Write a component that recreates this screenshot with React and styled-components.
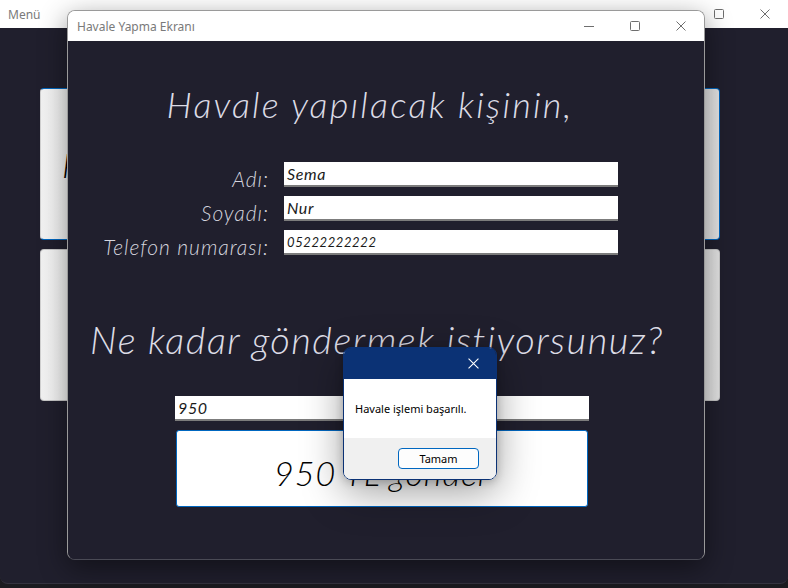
import React from 'react';
import styled, { createGlobalStyle } from 'styled-components';

const GlobalStyle = createGlobalStyle`
  html, body {
    margin: 0;
    padding: 0;
    background: #1b1b20;
    overflow: hidden;
  }
  * {
    box-sizing: border-box;
  }
`;

const uiFont = `"Noto Sans", "Open Sans", sans-serif`;
const formFont = `Lato, "Open Sans", sans-serif`;

const Desktop = styled.div`
  position: relative;
  width: 788px;
  height: 588px;
  background: #1b1b20;
`;

const MenuWindow = styled.div`
  display: flex;
  flex-direction: column;
  height: 584px;
  background: #201f2d;
  border-bottom-left-radius: 8px;
  border-bottom-right-radius: 8px;
  border-bottom: 1px solid #34333f;
  overflow: hidden;
`;

const TitleBar = styled.div`
  display: flex;
  align-items: center;
  justify-content: space-between;
  height: ${({ $height }) => $height}px;
  background: #ffffff;
  flex-shrink: 0;
`;

const TitleText = styled.span`
  padding-left: ${({ $indent }) => $indent}px;
  font-family: ${uiFont};
  font-size: 12px;
  color: #7a7a7a;
`;

const Controls = styled.div`
  display: flex;
  height: 100%;
`;

const ControlButton = styled.div`
  width: 46px;
  height: 100%;
  display: flex;
  align-items: center;
  justify-content: center;
  color: ${({ $light }) => ($light ? '#ffffff' : '#6e6e6e')};
`;

const MenuBody = styled.div`
  display: flex;
  flex-direction: column;
  gap: 9px;
  padding: 60px 68px 0 40px;
`;

const MenuCard = styled.div`
  height: 152px;
  display: flex;
  align-items: center;
  justify-content: ${({ $centered }) => ($centered ? 'center' : 'flex-start')};
  padding-left: ${({ $centered }) => ($centered ? 0 : 21)}px;
  border-radius: 4px;
  border: 1px solid ${({ $active }) => ($active ? '#0067c0' : '#c8c8c8')};
  border-left-color: #d0d0d0;
  background: linear-gradient(to right, #f2f2f2, #ffffff 10%, #f4f4f4 80%, #e4e4e4);
  font-family: ${formFont};
  font-style: italic;
  font-weight: 300;
  font-size: 34px;
  letter-spacing: 1px;
  color: #000;
  white-space: nowrap;
  overflow: hidden;
`;

const Window = styled.div`
  position: absolute;
  left: 67px;
  top: 10px;
  width: 638px;
  height: 550px;
  display: flex;
  flex-direction: column;
  border: 1px solid #9a9a9a;
  border-bottom-color: #4a4a55;
  border-radius: 8px;
  overflow: hidden;
  box-shadow: 0 8px 28px rgba(0, 0, 0, 0.45);
`;

const WindowBody = styled.div`
  flex: 1;
  display: flex;
  flex-direction: column;
  align-items: flex-start;
  background: #201f2d;
  padding-top: 42px;
`;

const Heading = styled.div`
  align-self: center;
  font-family: ${formFont};
  font-style: italic;
  font-weight: 300;
  font-size: ${({ $size }) => $size}px;
  line-height: ${({ $line }) => $line}px;
  letter-spacing: ${({ $spacing }) => $spacing}px;
  margin-top: ${({ $top }) => $top}px;
  margin-right: ${({ $shift }) => $shift}px;
  color: #dcdce6;
  white-space: nowrap;
`;

const FormGrid = styled.div`
  display: grid;
  grid-template-columns: 201px 334px;
  grid-auto-rows: 25px;
  column-gap: 15px;
  row-gap: 9px;
  margin-top: 37px;
`;

const Label = styled.label`
  height: 25px;
  text-align: right;
  font-family: ${formFont};
  font-style: italic;
  font-weight: 300;
  font-size: 21px;
  letter-spacing: 1px;
  line-height: 33px;
  color: #d4d4de;
  white-space: nowrap;
`;

const Field = styled.div`
  height: 25px;
  width: ${({ $width }) => $width || 334}px;
  margin-left: ${({ $left }) => $left || 0}px;
  margin-top: ${({ $top }) => $top || 0}px;
  display: flex;
  align-items: center;
  padding-left: 3px;
  background: #ffffff;
  border-bottom: 2px solid #7c7c7c;
  font-family: ${formFont};
  font-style: italic;
  font-weight: 400;
  font-size: ${({ $size }) => $size || 16}px;
  letter-spacing: 0.6px;
  color: #1a1a1a;
`;

const SendButton = styled.div`
  width: 412px;
  height: 77px;
  margin-left: 108px;
  margin-top: 9px;
  display: flex;
  align-items: center;
  justify-content: center;
  padding-top: 8px;
  border: 1px solid #0067c0;
  border-radius: 3px;
  background: #ffffff;
  font-family: ${formFont};
  font-style: italic;
  font-weight: 300;
  font-size: 34px;
  letter-spacing: 1px;
  color: #000;
`;

const MessageBox = styled.div`
  position: absolute;
  left: 343px;
  top: 347px;
  width: 154px;
  height: 133px;
  display: flex;
  flex-direction: column;
  border: 1px solid #0b3275;
  border-radius: 8px;
  overflow: hidden;
  box-shadow: 0 12px 40px rgba(0, 0, 0, 0.38), 0 2px 8px rgba(0, 0, 0, 0.2);
`;

const MessageHeader = styled.div`
  height: 31px;
  display: flex;
  justify-content: flex-end;
  background: #0b3275;
  flex-shrink: 0;
`;

const MessageText = styled.div`
  height: 59px;
  display: flex;
  align-items: center;
  padding-left: 11px;
  background: #ffffff;
  font-family: ${uiFont};
  font-size: 11px;
  color: #000;
  white-space: nowrap;
`;

const MessageFooter = styled.div`
  flex: 1;
  display: flex;
  justify-content: flex-end;
  align-items: flex-start;
  padding: 10px 17px 0 0;
  background: #f0f0f0;
`;

const OkButton = styled.div`
  width: 81px;
  height: 21px;
  display: flex;
  align-items: center;
  justify-content: center;
  border: 1px solid #0067c0;
  border-radius: 4px;
  background: #fdfdfd;
  font-family: ${uiFont};
  font-size: 11px;
  color: #000;
`;

const MinimizeIcon = () => (
  <svg width="10" height="10" viewBox="0 0 10 10">
    <path d="M0 5.5h10" stroke="currentColor" strokeWidth="1" />
  </svg>
);

const MaximizeIcon = () => (
  <svg width="10" height="10" viewBox="0 0 10 10">
    <rect x="0.5" y="0.5" width="9" height="9" rx="1" fill="none" stroke="currentColor" strokeWidth="1" />
  </svg>
);

const CloseIcon = ({ size = 10 }) => (
  <svg width={size} height={size} viewBox="0 0 10 10">
    <path d="M0.5 0.5L9.5 9.5M9.5 0.5L0.5 9.5" stroke="currentColor" strokeWidth="1" />
  </svg>
);

const App = () => (
  <Desktop>
    <GlobalStyle />
    <MenuWindow>
      <TitleBar $height={28}>
        <TitleText $indent={8}>Menü</TitleText>
        <Controls>
          <ControlButton>
            <MaximizeIcon />
          </ControlButton>
          <ControlButton>
            <CloseIcon />
          </ControlButton>
        </Controls>
      </TitleBar>
      <MenuBody>
        <MenuCard $active>Para transferi ve havale işlemleri</MenuCard>
        <MenuCard $centered>Hesap bilgileri</MenuCard>
      </MenuBody>
    </MenuWindow>

    <Window>
      <TitleBar $height={30}>
        <TitleText $indent={9}>Havale Yapma Ekranı</TitleText>
        <Controls>
          <ControlButton>
            <MinimizeIcon />
          </ControlButton>
          <ControlButton>
            <MaximizeIcon />
          </ControlButton>
          <ControlButton>
            <CloseIcon />
          </ControlButton>
        </Controls>
      </TitleBar>
      <WindowBody>
        <Heading $size={36} $line={42} $spacing={2.2} $top={0} $shift={32}>
          Havale yapılacak kişinin,
        </Heading>
        <FormGrid>
          <Label>Adı:</Label>
          <Field>Sema</Field>
          <Label>Soyadı:</Label>
          <Field>Nur</Field>
          <Label>Telefon numarası:</Label>
          <Field $size={13}>05222222222</Field>
        </FormGrid>
        <Heading $size={38} $line={44} $spacing={1.5} $top={62} $shift={18}>
          Ne kadar göndermek istiyorsunuz?
        </Heading>
        <Field $width={414} $left={107} $top={35}>950</Field>
        <SendButton>950 TL gönder</SendButton>
      </WindowBody>
    </Window>

    <MessageBox>
      <MessageHeader>
        <ControlButton $light>
          <CloseIcon size={11} />
        </ControlButton>
      </MessageHeader>
      <MessageText>Havale işlemi başarılı.</MessageText>
      <MessageFooter>
        <OkButton>Tamam</OkButton>
      </MessageFooter>
    </MessageBox>
  </Desktop>
);

export default App;
